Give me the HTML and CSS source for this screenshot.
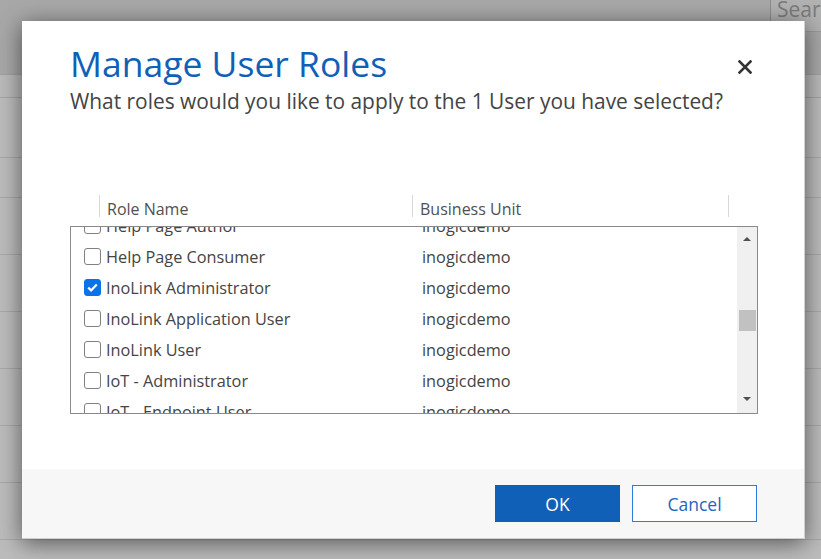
FILE: index.html
```html
<!DOCTYPE html>
<html>
<head>
<meta charset="utf-8">
<link rel="stylesheet" href="styles.css">
</head>
<body>
<div class="page">
  <div class="topbar"><div class="search">Search</div></div>
  <div class="band"></div>
  <div class="bgrow h60"></div>
  <div class="bgrow h40"></div>
  <div class="bgrow h57"></div>
  <div class="bgrow h57"></div>
  <div class="bgrow h57"></div>
  <div class="bgrow h57"></div>
  <div class="bgrow h57"></div>
  <div class="bgrow h57"></div>
</div>

<div class="dialog">
  <div class="content">
    <div class="title-row">
      <h1 class="title">Manage User Roles</h1>
      <button class="close" aria-label="Close">
        <svg width="14" height="14" viewBox="0 0 14 14"><path d="M1.5 1.5 L12.5 12.5 M12.5 1.5 L1.5 12.5" stroke="#333" stroke-width="2.6" stroke-linecap="square"/></svg>
      </button>
    </div>
    <p class="subtitle">What roles would you like to apply to the 1 User you have selected?</p>

    <div class="grid-head">
      <div class="hcell c1">Role Name</div>
      <div class="hcell c2">Business Unit</div>
      <div class="hcell c3"></div>
    </div>

    <div class="listbox">
      <div class="rows">
        <div class="rows-inner">
          <div class="row"><span class="cb"></span><span class="name">Help Page Author</span><span class="bu">inogicdemo</span></div>
          <div class="row"><span class="cb"></span><span class="name">Help Page Consumer</span><span class="bu">inogicdemo</span></div>
          <div class="row"><span class="cb checked"><svg width="11" height="9" viewBox="0 0 11 9"><path d="M1.2 4.6 L4.1 7.4 L9.8 1.4" fill="none" stroke="#fff" stroke-width="2.2"/></svg></span><span class="name">InoLink Administrator</span><span class="bu">inogicdemo</span></div>
          <div class="row"><span class="cb"></span><span class="name">InoLink Application User</span><span class="bu">inogicdemo</span></div>
          <div class="row"><span class="cb"></span><span class="name">InoLink User</span><span class="bu">inogicdemo</span></div>
          <div class="row"><span class="cb"></span><span class="name">IoT - Administrator</span><span class="bu">inogicdemo</span></div>
          <div class="row"><span class="cb"></span><span class="name">IoT - Endpoint User</span><span class="bu">inogicdemo</span></div>
        </div>
      </div>
      <div class="scrollbar">
        <div class="arrow up"></div>
        <div class="track"><div class="thumb"></div></div>
        <div class="arrow down"></div>
      </div>
    </div>
  </div>
  <div class="footer">
    <button class="btn ok">OK</button>
    <button class="btn cancel">Cancel</button>
  </div>
</div>
</body>
</html>
```

FILE: styles.css
```css
html, body {
  margin: 0;
  padding: 0;
  width: 821px;
  height: 559px;
  overflow: hidden;
  font-family: "Open Sans", "Noto Sans", sans-serif;
}

.page {
  width: 821px;
  height: 559px;
  background: #bcbcbc;
  display: flex;
  flex-direction: column;
}

.topbar {
  height: 75px;
  flex: none;
  background: #a8a8a8;
  display: flex;
  justify-content: flex-end;
  align-items: flex-start;
  border-bottom: 1px solid #a0a0a0;
  box-sizing: border-box;
}

.search {
  width: 51px;
  height: 32px;
  box-sizing: border-box;
  border-left: 1px solid #8c8c8c;
  border-bottom: 1px solid #9a9a9a;
  background: #b2b2b2;
  color: #7b7b7b;
  font-size: 21px;
  line-height: 18px;
  padding-left: 6px;
  overflow: hidden;
  white-space: nowrap;
}

.band {
  height: 23px;
  flex: none;
  background: #bababa;
  border-bottom: 1px solid #a4a4a4;
  box-sizing: border-box;
}

.bgrow {
  flex: none;
  border-bottom: 1px solid #a8a8a8;
  box-sizing: border-box;
}
.h60 { height: 60px; }
.h40 { height: 40px; }
.h57 { height: 57px; }

.dialog {
  position: absolute;
  left: 22px;
  top: 21px;
  width: 783px;
  height: 518px;
  background: #fff;
  box-shadow: 0 4px 22px rgba(0, 0, 0, 0.55);
  display: flex;
  flex-direction: column;
  box-sizing: border-box;
  border-right: 1px solid #d0d0d0;
  border-bottom: 1px solid #d0d0d0;
}

.content {
  flex: 1;
  padding: 20px 46px 0 48px;
}

.title-row {
  display: flex;
  justify-content: space-between;
  align-items: flex-start;
}

.title {
  margin: 0;
  font-weight: 400;
  font-size: 35.5px;
  line-height: 44px;
  color: #1160b7;
  letter-spacing: 0;
}

.close {
  border: 0;
  background: none;
  padding: 0;
  margin: 19px 6px 0 0;
  width: 14px;
  height: 14px;
  display: block;
}
.close svg { display: block; }

.subtitle {
  margin: 3px 0 0 0;
  font-size: 20.9px;
  line-height: 26px;
  color: #444;
}

.grid-head {
  margin-top: 80px;
  height: 26px;
  display: flex;
  padding-left: 29px;
}

.hcell {
  border-left: 1px solid #d8d8d8;
  padding-left: 7px;
  padding-top: 4px;
  height: 18px;
  margin-top: 1px;
  font-size: 16px;
  color: #505050;
  line-height: 20px;
  white-space: nowrap;
}
.c1 { width: 305px; }
.c2 { width: 308px; }
.c3 { width: 0; padding-left: 0; }

.listbox {
  margin-top: 6px;
  height: 188px;
  box-sizing: border-box;
  border: 1px solid #8a8a8a;
  display: flex;
}

.rows {
  flex: 1;
  overflow: hidden;
}

.rows-inner {
  margin-top: -17px;
}

.row {
  height: 31px;
  display: flex;
  align-items: center;
  padding-left: 13px;
  font-size: 16.3px;
  color: #444;
  white-space: nowrap;
}

.cb {
  width: 17px;
  height: 17px;
  box-sizing: border-box;
  border: 1.5px solid #808080;
  border-radius: 3px;
  background: #fff;
  flex: none;
  display: flex;
  align-items: center;
  justify-content: center;
}
.cb.checked {
  background: #0b72e9;
  border-color: #0b72e9;
}
.cb.checked svg { display: block; }

.name {
  margin-left: 5px;
  width: 316px;
}

.scrollbar {
  width: 20px;
  flex: none;
  background: #f0f0f0;
  display: flex;
  flex-direction: column;
  align-items: center;
}

.arrow {
  width: 0;
  height: 0;
  border-left: 4.5px solid transparent;
  border-right: 4.5px solid transparent;
  flex: none;
}
.arrow.up {
  border-bottom: 4.5px solid #505050;
  margin-top: 10px;
}
.arrow.down {
  border-top: 4.5px solid #505050;
  margin-bottom: 12px;
}

.track {
  flex: 1;
  width: 100%;
  display: flex;
  justify-content: center;
}

.thumb {
  margin-top: 69px;
  width: 17px;
  height: 21px;
  background: #c1c1c1;
}

.footer {
  height: 69px;
  flex: none;
  background: #f7f7f7;
  display: flex;
  justify-content: flex-end;
  align-items: flex-start;
  padding: 16px 47px 0 0;
  gap: 12px;
  box-sizing: border-box;
}

.btn {
  width: 125px;
  height: 37px;
  box-sizing: border-box;
  font-family: "Open Sans", "Noto Sans", sans-serif;
  font-size: 17.5px;
  padding: 0;
}
.ok {
  background: #1160b7;
  border: 1px solid #1160b7;
  color: #fff;
}
.cancel {
  background: #fff;
  border: 1px solid #2b7fd8;
  color: #2266c0;
}
```
